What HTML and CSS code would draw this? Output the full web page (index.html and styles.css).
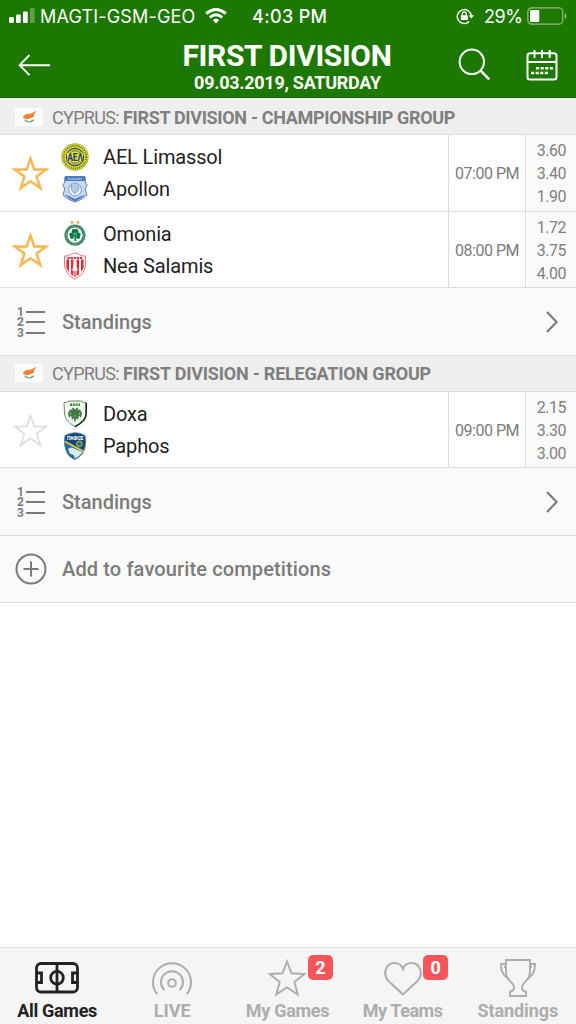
FILE: index.html
```html
<!DOCTYPE html>
<html lang="en">
<head>
    <meta charset="UTF-8">
    <meta name="viewport" content="width=device-width, initial-scale=1.0">
    <title>First Division</title>
    <link rel="stylesheet" href="styles.css">
</head>
<body>
    <!-- shared shapes -->
    <svg class="defs" width="0" height="0">
        <symbol id="star" viewBox="0 0 36 36">
            <path d="M18 3.5 L21.7 14 L33 14.2 L24 21 L27.5 32.2 L18 25.5 L8.5 32.2 L12 21 L3 14.2 L14.3 14 Z"/>
        </symbol>
        <symbol id="flag" viewBox="0 0 28 18">
            <rect width="28" height="18" fill="#fcfcfc"/>
            <path d="M8 8.8 L9.5 7 L12 6 L16 5.6 L21.8 2.6 L18.8 6.4 L19.2 8.5 L15.5 10.3 L11.5 11.2 L8.8 10.4 Z" fill="#ee8434"/>
            <path d="M9.8 12 Q14.2 16 19 11.6" fill="none" stroke="#6fa291" stroke-width="1.6" stroke-dasharray="4.6 .7"/>
        </symbol>
        <symbol id="chevron" viewBox="0 0 14 24">
            <path d="M2 2 L11.6 12 L2 22" fill="none" stroke="#7b7b7b" stroke-width="2.1"/>
        </symbol>
    </svg>

    <header class="top">
        <div class="status">
            <svg class="signal" width="26" height="16" viewBox="0 0 26 16" fill="#fff">
                <rect x="0" y="9" width="4.8" height="6" rx="1.3"/>
                <rect x="7" y="6.5" width="4.8" height="8.5" rx="1.3"/>
                <rect x="14" y="3.5" width="4.8" height="11.5" rx="1.3"/>
                <rect x="21" y="0" width="4.6" height="15" rx="1.3" opacity=".3"/>
            </svg>
            <span class="carrier">MAGTI-GSM-GEO</span>
            <svg class="wifi" width="22" height="16" viewBox="0 0 22 16" fill="none" stroke="#fff" stroke-width="2.9">
                <path d="M1.2 5.6 Q11 -2.6 20.8 5.6"/>
                <path d="M4.8 9.3 Q11 4 17.2 9.3"/>
                <path d="M11 15.5 L7.7 12.1 Q11 9.4 14.3 12.1 Z" fill="#fff" stroke="none"/>
            </svg>
            <span class="clock">4:03 PM</span>
            <svg class="lock" width="18" height="17" viewBox="0 0 18 17" fill="none" stroke="#fff" stroke-width="1.4">
                <path d="M13.2 13.6 A7 7 0 1 1 15.3 8"/>
                <path d="M12.6 7.2 H18 L15.3 10.6 Z" fill="#fff" stroke="none"/>
                <rect x="4.8" y="7.3" width="7" height="4.8" rx=".6" fill="#fff" stroke="none"/>
                <path d="M6.3 7.5 V6 A2 2 0 0 1 10.3 6 V7.5"/>
            </svg>
            <span class="percent">29%</span>
            <svg class="battery" width="41" height="18" viewBox="0 0 41 18">
                <rect x=".8" y=".8" width="35" height="16.4" rx="4" fill="none" stroke="#fff" stroke-width="1.2" opacity=".5"/>
                <rect x="3" y="3" width="9.3" height="12" rx="1.2" fill="#fff"/>
                <path d="M37.8 6 Q41.5 9 37.8 12 Z" fill="#fff" opacity=".5"/>
            </svg>
        </div>
        <div class="navbar">
            <svg class="back" width="32" height="22" viewBox="0 0 32 22" fill="none" stroke="#fff" stroke-width="1.9">
                <path d="M1 11.2 H32 M11.5 1 L1.6 11.2 L11.5 21.2"/>
            </svg>
            <div class="title">
                <h1>FIRST DIVISION</h1>
                <p>09.03.2019, SATURDAY</p>
            </div>
            <svg class="search" width="33" height="33" viewBox="0 0 33 33" fill="none" stroke="#fff" stroke-width="2">
                <circle cx="13.8" cy="13.8" r="12.2"/>
                <path d="M22.6 22.6 L31.2 31.4" stroke-width="2.6"/>
            </svg>
            <svg class="calendar" width="32" height="32" viewBox="0 0 32 32" fill="none" stroke="#fff" stroke-width="2">
                <rect x="1.5" y="4.2" width="29" height="26.3" rx="2.5"/>
                <path d="M1 13 H31 M8.5 1 V9 M16 1 V9 M23.7 1 V9"/>
                <path d="M10 19.3 H28 M5 24 H23" stroke-width="2.4" stroke-dasharray="3.1 1.5"/>
            </svg>
        </div>
    </header>

    <main>
        <h2 class="league first"><svg class="flag"><use href="#flag"/></svg><span class="country">CYPRUS:</span><b>FIRST DIVISION - CHAMPIONSHIP GROUP</b></h2>

        <div class="match">
            <svg class="star"><use href="#star"/></svg>
            <div class="teams">
                <div class="team">
                    <svg class="crest" viewBox="0 0 28 28">
                        <circle cx="14" cy="14" r="13.4" fill="#e8e120" stroke="#a5a546" stroke-width=".8"/>
                        <circle cx="14" cy="14" r="11.3" fill="none" stroke="#5c6a6a" stroke-width="1.9" stroke-dasharray="1.1 1"/>
                        <circle cx="14" cy="14" r="8.6" fill="#e8e120" stroke="#244478" stroke-width="1.2"/>
                        <circle cx="14" cy="14" r="6.3" fill="none" stroke="#244478" stroke-width=".8"/>
                        <rect x="6" y="9.8" width="16" height="8.4" fill="#e8e120"/>
                        <text x="6.2" y="18" font-family="Roboto, sans-serif" font-weight="700" font-size="11" textLength="15.6" lengthAdjust="spacingAndGlyphs" fill="#173b80">AEΛ</text>
                    </svg>
                    <span>AEL Limassol</span>
                </div>
                <div class="team">
                    <svg class="crest" viewBox="0 0 28 28">
                        <path d="M4 1.5 H24 L24.5 8 L26.2 9.5 L24.3 14 L26 20 Q22 24.5 14 27 Q6 24.5 2 20 L3.7 14 L1.8 9.5 L3.5 8 Z" fill="#c9d9ee" stroke="#5684c6" stroke-width="1"/>
                        <path d="M4 1.5 H24 V6 H4 Z" fill="#4b78bb"/>
                        <path d="M7 4 H21" stroke="#c9d9ee" stroke-width="1.6" stroke-dasharray="1.3 .8"/>
                        <circle cx="14" cy="14.5" r="6.4" fill="#e8f0fa" stroke="#7ca0d2"/>
                        <path d="M14 8.5 V19 M10.5 10 Q9.5 17 14 17.5 Q18.5 17 17.5 10 M12 9 V16 M16 9 V16" fill="none" stroke="#7899c9" stroke-width=".9"/>
                        <path d="M3.5 19.5 Q9 21 14 24 Q19 21 24.5 19.5 Q20 24 14 26.4 Q8 24 3.5 19.5" fill="#4b78bb"/>
                    </svg>
                    <span>Apollon</span>
                </div>
            </div>
            <div class="time">07:00 PM</div>
            <div class="odds"><span>3.60</span><span>3.40</span><span>1.90</span></div>
        </div>

        <div class="match">
            <svg class="star"><use href="#star"/></svg>
            <div class="teams">
                <div class="team">
                    <svg class="crest" viewBox="0 0 28 28">
                        <circle cx="11" cy="2.4" r="1.4" fill="#cfa754"/>
                        <circle cx="17" cy="2.4" r="1.4" fill="#cfa754"/>
                        <circle cx="14" cy="15.2" r="10.6" fill="#36825b"/>
                        <circle cx="14" cy="15.2" r="9" fill="none" stroke="#8db9a1" stroke-width="1" stroke-dasharray="1 .8"/>
                        <circle cx="14" cy="15.2" r="7.6" fill="#fff"/>
                        <g fill="#08784a">
                            <circle cx="12.7" cy="11.2" r="2.1"/><circle cx="15.3" cy="11.2" r="2.1"/>
                            <circle cx="10.3" cy="14.6" r="2"/><circle cx="10.9" cy="16.9" r="2"/>
                            <circle cx="17.7" cy="14.6" r="2"/><circle cx="17.1" cy="16.9" r="2"/>
                            <path d="M11.5 12 L14 14 L16.5 12 L15.2 15 L17.5 17 L14.8 16.5 L15.4 21 H13.4 L13.5 16.5 L10.5 17 L12.8 15 Z"/>
                        </g>
                    </svg>
                    <span>Omonia</span>
                </div>
                <div class="team">
                    <svg class="crest" viewBox="0 0 28 28">
                        <path d="M3.5 4 Q7 4.5 9.5 2.5 L14 .8 L18.5 2.5 Q21 4.5 24.5 4 V13 Q24 22 14 27.3 Q4 22 3.5 13 Z" fill="#fff" stroke="#e7747b" stroke-width="1"/>
                        <path d="M5.4 7.5 H8 V20 L5.4 16 Z M10 7.5 H12.4 V24 L10 22.5 Z M15.6 7.5 H18 V22.5 L15.6 24 Z M20 7.5 H22.6 V16 L20 20 Z" fill="#e62835"/>
                        <path d="M6.5 6 H21.5" stroke="#e62835" stroke-width="2" stroke-dasharray="2.2 .9"/>
                        <path d="M14 10 L11 18.5 H12.6 L13 17 H15 L15.4 18.5 H17 Z" fill="#fff"/>
                        <path d="M14 19 V25" stroke="#e62835" stroke-width="1.2"/>
                    </svg>
                    <span>Nea Salamis</span>
                </div>
            </div>
            <div class="time">08:00 PM</div>
            <div class="odds"><span>1.72</span><span>3.75</span><span>4.00</span></div>
        </div>

        <div class="link">
            <div class="list"><span>1</span><i></i><span>2</span><i></i><span>3</span><i></i></div>
            <span>Standings</span>
            <svg class="chevron"><use href="#chevron"/></svg>
        </div>

        <h2 class="league"><svg class="flag"><use href="#flag"/></svg><span class="country">CYPRUS:</span><b class="relegation">FIRST DIVISION - RELEGATION GROUP</b></h2>

        <div class="match">
            <svg class="star off"><use href="#star"/></svg>
            <div class="teams">
                <div class="team">
                    <svg class="crest" viewBox="0 0 28 28">
                        <path d="M3 2.5 Q6 3 8 1 H20 Q22 3 25 2.5 V14 Q25 21 14 26.5 Q3.5 21 3.5 13 Z" fill="#f4f8f1" stroke="#5f8f60" stroke-width="1"/>
                        <path d="M25.2 3 V14 Q25 21 14 26.8" fill="none" stroke="#14371a" stroke-width="1.6"/>
                        <path d="M9 4.7 H19" stroke="#467f46" stroke-width="2.6" stroke-dasharray="2 .8"/>
                        <path d="M14 9.5 L12 7.5 L10.5 8.5 L12 10 L9 9.5 L7 13 L8 18 L10 15.5 L11 20 L12.5 18 L14 22.5 L15.5 18 L17 20 L18 15.5 L20 18 L21 13 L19 9.5 L16 10 L17.5 8.5 L16 7.5 Z" fill="#427744"/>
                        <path d="M9 12 L10 15 M19 12 L18 15 M12.5 16 H15.5" stroke="#a4c39d" stroke-width=".8"/>
                    </svg>
                    <span>Doxa</span>
                </div>
                <div class="team">
                    <svg class="crest" viewBox="0 0 28 28">
                        <path d="M4 3.5 Q10 .5 14 .8 Q19 .5 24 3.5 Q26 14 21.5 21.5 Q18 26 14 27.5 Q9 26 6 21 Q2 13 4 3.5 Z" fill="#246b9f" stroke="#47758e" stroke-width=".8"/>
                        <path d="M4.5 4 Q14 -1 23.5 4 Q25 11 23 17.5 L4 9 Z" fill="#174777"/>
                        <path d="M7 17 Q10 14 14 17 L21.5 20 Q18 25 14 26.4 Q13 22 9 22 Z" fill="#dce9f1"/>
                        <path d="M3.8 9.5 L22.5 19.5" stroke="#dccf45" stroke-width="1.5"/>
                        <circle cx="18.4" cy="11.8" r="2.8" fill="#397167" stroke="#c6ba54" stroke-width="1"/>
                        <text x="14" y="8" text-anchor="middle" font-family="Roboto, sans-serif" font-weight="700" font-size="5" fill="#fff">ΠΑΦΟΣ</text>
                    </svg>
                    <span>Paphos</span>
                </div>
            </div>
            <div class="time">09:00 PM</div>
            <div class="odds"><span>2.15</span><span>3.30</span><span>3.00</span></div>
        </div>

        <div class="link">
            <div class="list"><span>1</span><i></i><span>2</span><i></i><span>3</span><i></i></div>
            <span>Standings</span>
            <svg class="chevron"><use href="#chevron"/></svg>
        </div>
        <div class="link add">
            <svg class="plus" viewBox="0 0 32 32" fill="none" stroke="#7b7b7b" stroke-width="2">
                <circle cx="16" cy="16" r="14.5"/>
                <path d="M8.5 16 H23.5 M16 8.5 V23.5"/>
            </svg>
            <span>Add to favourite competitions</span>
        </div>
    </main>

    <nav class="tabs">
        <a class="tab active">
            <svg width="44" height="32" viewBox="0 0 44 32" fill="none" stroke="#222" stroke-width="2.8">
                <rect x="1.5" y="1.5" width="41" height="28.5" rx="4.5"/>
                <path d="M22 1.5 V30 M1.5 11 H6.5 V20.5 H1.5 M42.5 11 H37.5 V20.5 H42.5"/>
                <circle cx="22" cy="15.7" r="6.3"/>
            </svg>
            <span>All Games</span>
        </a>
        <a class="tab">
            <svg width="42" height="33" viewBox="0 0 42 33" fill="none" stroke="#adadad" stroke-width="2">
                <circle cx="21" cy="21" r="3.8"/>
                <path d="M13.3 28 A11 11 0 1 1 28.7 28 M6.2 32.2 A19 19 0 1 1 35.8 32.2"/>
            </svg>
            <span class="live">LIVE</span>
        </a>
        <a class="tab">
            <svg width="40" height="40" viewBox="0 0 40 40" fill="none" stroke="#adadad" stroke-width="1.9">
                <path d="M20 3.5 L24.5 15.3 L37.3 16 L27.3 24 L30.8 36.5 L20 29.5 L9.2 36.5 L12.7 24 L2.7 16 L15.5 15.3 Z"/>
            </svg>
            <i class="badge">2</i>
            <span>My Games</span>
        </a>
        <a class="tab">
            <svg width="38" height="35" viewBox="0 0 38 35" fill="none" stroke="#adadad" stroke-width="2">
                <path d="M19 33.5 L4.5 20 C-2 13 2 2 10.5 2 C15 2 17.8 4.5 19 8 C20.2 4.5 23 2 27.5 2 C36 2 40 13 33.5 20 Z"/>
            </svg>
            <i class="badge">0</i>
            <span class="my-teams">My Teams</span>
        </a>
        <a class="tab">
            <svg width="38" height="40" viewBox="0 0 38 40" fill="none" stroke="#adadad" stroke-width="1.9">
                <path d="M7 2 H31 V13 Q31 20 26 24 Q23 26.5 23 29.5 Q23 33 27 33.5 V38 H11 V33.5 Q15 33 15 29.5 Q15 26.5 12 24 Q7 20 7 13 Z"/>
                <path d="M7 6 H2 Q1.5 16 10 21.5 M31 6 H36 Q36.5 16 28 21.5 M7 9 H5 M33 9 H31"/>
            </svg>
            <span class="standings">Standings</span>
        </a>
    </nav>
</body>
</html>
```
FILE: styles.css
```css
* {
    box-sizing: border-box;
}

body {
    margin: 0;
    height: 100vh;
    display: flex;
    flex-direction: column;
    overflow: hidden;
    background: #fff;
    color: #222;
    font-family: Roboto, sans-serif;
}

svg {
    display: block;
    flex: none;
}

.defs {
    position: absolute;
}

h1, h2, p {
    margin: 0;
}

/* green header */
.top {
    height: 98px;
    flex: none;
    background: #1c7800;
    color: #fff;
    border-bottom: 1px solid #176500;
}

.status {
    height: 32px;
    display: flex;
    align-items: center;
    padding-left: 9px;
    font-family: Inter, sans-serif;
    font-size: 18px;
    white-space: nowrap;
}

.carrier {
    width: 157px;
    margin-left: 5px;
    letter-spacing: .17px;
}

.wifi {
    margin-left: 8px;
}

.clock {
    width: 76px;
    margin-left: 25px;
    font-weight: 500;
    letter-spacing: .35px;
}

.lock {
    margin-left: 128px;
}

.percent {
    width: 39px;
    margin-left: 10px;
    letter-spacing: -.5px;
}

.battery {
    margin-left: 4px;
}

.navbar {
    height: 65px;
    display: flex;
    align-items: center;
    padding: 0 18px;
}

.title {
    width: 230px;
    margin-left: 122px;
    padding-top: 2px;
    text-align: center;
    white-space: nowrap;
}

.title h1 {
    font-size: 30px;
    line-height: 34px;
    font-weight: 700;
    letter-spacing: -.35px;
}

.title p {
    font-size: 18px;
    line-height: 19px;
    font-weight: 700;
    letter-spacing: -.27px;
    padding-left: 1px;
}

.search {
    margin-left: 56px;
}

.calendar {
    margin-left: 35px;
}

/* competition header */
.league {
    height: 36px;
    display: flex;
    align-items: center;
    padding-left: 15px;
    background: #efefef;
    border-bottom: 1px solid #dcdcdc;
    color: #7f7f7f;
    font-size: 18px;
    font-weight: 400;
    white-space: nowrap;
}

.league.first {
    height: 37px;
    padding-top: 2px;
}

.league b {
    letter-spacing: -.33px;
}

.league .relegation {
    letter-spacing: -.21px;
}

.flag {
    width: 28px;
    height: 18px;
}

.country {
    width: 71px;
    margin-left: 9px;
    letter-spacing: -.7px;
}

/* games */
.match {
    height: 76.5px;
    display: flex;
    border-bottom: 1px solid #dcdcdc;
}

.star {
    width: 37px;
    height: 37px;
    margin: 20px 0 0 12px;
    fill: none;
    stroke: #f8b856;
    stroke-width: 2.5;
}

.star.off {
    stroke: #dfdfdf;
    stroke-width: 1.8;
}

.teams {
    flex: 1;
    padding: 6px 0 0 12px;
}

.team {
    height: 32px;
    display: flex;
    align-items: center;
    font-size: 20px;
    letter-spacing: -.15px;
}

.crest {
    width: 28px;
    height: 28px;
    margin-right: 14px;
}

.time {
    width: 77px;
    display: flex;
    align-items: center;
    justify-content: center;
    padding-top: 2px;
    border-left: 1px solid #dcdcdc;
    color: #7b7b7b;
    font-size: 16px;
    letter-spacing: -.5px;
    white-space: nowrap;
}

.odds {
    width: 51px;
    display: flex;
    flex-direction: column;
    justify-content: center;
    padding: 2px 10px 0 0;
    border-left: 1px solid #dcdcdc;
    background: #fafafa;
    color: #808080;
    font-size: 16px;
    line-height: 23px;
    letter-spacing: -.5px;
    text-align: right;
}

/* grey action rows */
.link {
    height: 67.5px;
    display: flex;
    align-items: center;
    padding: 2px 17px 0 15px;
    background: #fafafa;
    border-bottom: 1px solid #dcdcdc;
    color: #7b7b7b;
    font-size: 20px;
    font-weight: 500;
}

.link.add {
    padding-top: 1px;
    letter-spacing: .13px;
}

.list {
    display: grid;
    grid-template-columns: 9px 19px;
    grid-auto-rows: 10.4px;
    align-items: center;
    margin: 0 17px 0 2px;
    font-size: 12px;
    line-height: 10px;
    font-weight: 700;
}

.list i {
    height: 2px;
    background: #7b7b7b;
}

.plus {
    width: 32px;
    height: 32px;
    margin-right: 15px;
}

.chevron {
    width: 14px;
    height: 24px;
    margin-left: auto;
}

/* bottom tabs */
.tabs {
    height: 77px;
    flex: none;
    display: flex;
    margin-top: auto;
    background: #f5f5f5;
    border-top: 1px solid #dcdcdc;
}

.tab {
    position: relative;
    width: 115.2px;
    display: flex;
    flex-direction: column;
    align-items: center;
    padding: 8px 1px 0 0;
    color: #adadad;
    font-size: 18px;
    line-height: 22px;
    font-weight: 700;
    letter-spacing: -.3px;
    white-space: nowrap;
}

.tab svg {
    margin: auto 0;
}

.tab span {
    margin-bottom: 2px;
}

.tab .live {
    letter-spacing: 0;
}

.tab .my-teams {
    letter-spacing: -.45px;
}

.tab .standings {
    letter-spacing: -.1px;
}

.tab.active {
    color: #222;
}

.badge {
    position: absolute;
    top: 7px;
    left: 77.5px;
    width: 25px;
    height: 25px;
    border-radius: 5px;
    background: #f65659;
    color: #fff;
    font-size: 18px;
    line-height: 25px;
    font-style: normal;
    text-align: center;
}
```
